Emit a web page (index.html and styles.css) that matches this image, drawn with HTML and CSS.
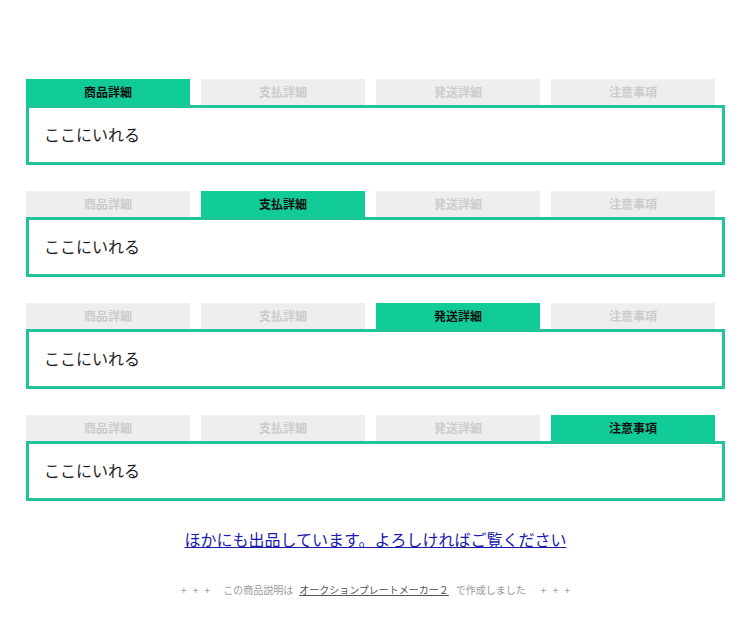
FILE: index.html
```html
<!DOCTYPE html>
<html lang="ja">
<head>
<meta charset="utf-8">
<link rel="stylesheet" href="styles.css">
</head>
<body>
<div class="wrap">
  <section class="block">
    <div class="tabs">
      <div class="tab active">商品詳細</div>
      <div class="tab">支払詳細</div>
      <div class="tab">発送詳細</div>
      <div class="tab">注意事項</div>
    </div>
    <div class="box">ここにいれる</div>
  </section>
  <section class="block">
    <div class="tabs">
      <div class="tab">商品詳細</div>
      <div class="tab active">支払詳細</div>
      <div class="tab">発送詳細</div>
      <div class="tab">注意事項</div>
    </div>
    <div class="box">ここにいれる</div>
  </section>
  <section class="block">
    <div class="tabs">
      <div class="tab">商品詳細</div>
      <div class="tab">支払詳細</div>
      <div class="tab active">発送詳細</div>
      <div class="tab">注意事項</div>
    </div>
    <div class="box">ここにいれる</div>
  </section>
  <section class="block">
    <div class="tabs">
      <div class="tab">商品詳細</div>
      <div class="tab">支払詳細</div>
      <div class="tab">発送詳細</div>
      <div class="tab active">注意事項</div>
    </div>
    <div class="box">ここにいれる</div>
  </section>
  <p class="more"><a href="#">ほかにも出品しています。よろしければご覧ください</a></p>
  <p class="footer"><span class="plus">+ + +</span><span class="t1">この商品説明は</span><a href="#">オークションプレートメーカー２</a><span class="t2">で作成しました</span><span class="plus">+ + +</span></p>
</div>
</body>
</html>
```
FILE: styles.css
```css
html, body {
  margin: 0;
  padding: 0;
  background: #fff;
}
body {
  font-family: "Noto Sans CJK JP", "Noto Sans", sans-serif;
  color: #222;
}
.wrap {
  width: 699px;
  margin-left: 26px;
  padding-top: 79px;
}
.block {
  margin-bottom: 26px;
}
.tabs {
  display: flex;
  gap: 11px;
}
.tab {
  width: 164px;
  height: 26px;
  line-height: 25px;
  text-align: center;
  font-size: 12px;
  font-weight: bold;
  background: #eeeeee;
  color: #cccccc;
}
.tab.active {
  background: #12cc98;
  color: #111;
}
.box {
  border: 3px solid #20c497;
  box-sizing: border-box;
  height: 60px;
  padding: 0 15px 3px;
  display: flex;
  align-items: center;
  font-size: 16px;
  color: #1c1c1c;
}
.more {
  margin: 22px 0 0;
  text-align: center;
  font-size: 16px;
  line-height: 24px;
}
.more a {
  color: #1a1ab0;
}
.footer {
  margin: 31px 0 0;
  display: flex;
  justify-content: center;
  align-items: baseline;
  font-size: 10px;
  line-height: 16px;
  color: #999;
}
.footer .plus {
  word-spacing: 4px;
}
.footer .t1 {
  margin: 0 6px 0 13px;
}
.footer .t2 {
  margin: 0 15px 0 7px;
}
.footer a {
  color: #555;
}
```
